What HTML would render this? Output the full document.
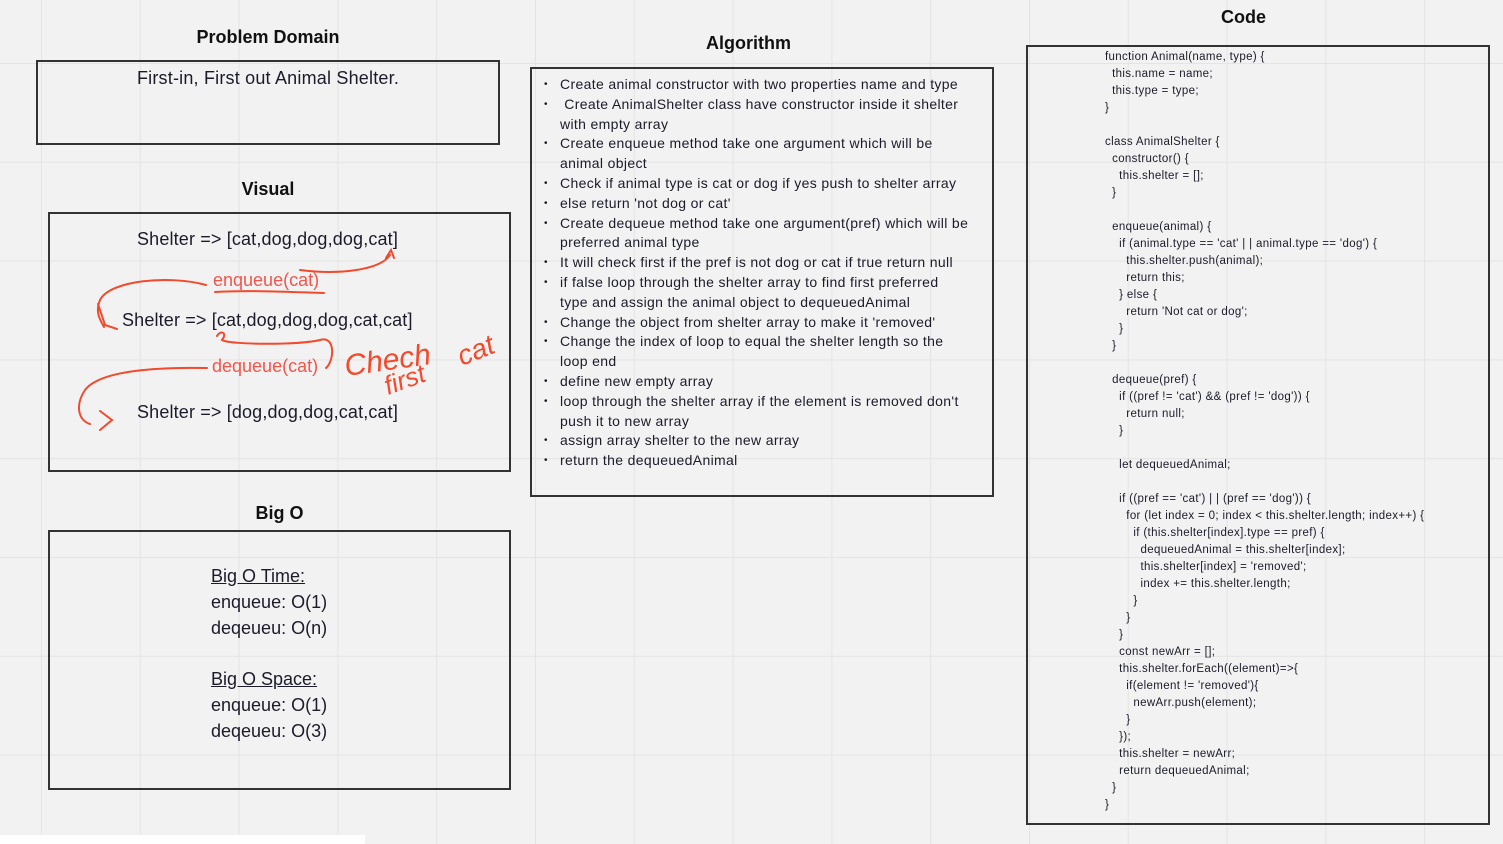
<!DOCTYPE html>
<html><head><meta charset="utf-8"><style>
html,body{margin:0;padding:0}
body{width:1503px;height:844px;overflow:hidden;position:relative;background-color:#f2f2f2;
background-image:linear-gradient(to right,#e4e4e4 1px,transparent 1px),linear-gradient(to bottom,#e4e4e4 1px,transparent 1px);
background-size:98.8px 98.8px;background-position:41px 63px;font-family:"Liberation Sans",sans-serif;color:#1b1b2a}
.abs{position:absolute}
.h{position:absolute;font-weight:bold;font-size:18px;text-align:center;color:#111}
.box{position:absolute;border:2px solid #333;box-sizing:border-box}
.t{position:absolute;font-size:18px;white-space:nowrap}
ul{margin:0;padding:0;list-style:none}
ul li{position:relative;padding-left:29px;font-size:14px;letter-spacing:0.35px;line-height:19.8px;white-space:nowrap}
ul li:before{content:"•";position:absolute;left:13px;font-size:10px}
pre{margin:0;font-family:"Liberation Sans",sans-serif;font-size:11.5px;letter-spacing:0.35px;line-height:17px;color:#1b1b2a}
</style></head><body>
<div class="h" style="left:37px;width:462px;top:27px">Problem Domain</div>
<div class="box" style="left:36px;top:60px;width:464px;height:85px"></div>
<div class="t" style="left:36px;width:464px;text-align:center;top:68px;letter-spacing:0.2px">First-in, First out Animal Shelter.</div>

<div class="h" style="left:37px;width:462px;top:179px">Visual</div>
<div class="box" style="left:48px;top:212px;width:463px;height:260px"></div>
<div class="t" style="left:137px;top:229px;letter-spacing:0.15px">Shelter =&gt; [cat,dog,dog,dog,cat]</div>
<div class="t" style="left:122px;top:310px;letter-spacing:0.15px">Shelter =&gt; [cat,dog,dog,dog,cat,cat]</div>
<div class="t" style="left:137px;top:402px;letter-spacing:0.15px">Shelter =&gt; [dog,dog,dog,cat,cat]</div>
<div class="t" style="left:213px;top:270px;color:#f2554a">enqueue(cat)</div>
<div class="t" style="left:212px;top:356px;color:#f2554a">dequeue(cat)</div>
<svg class="abs" style="left:0;top:0" width="1503" height="844" fill="none" stroke="#f24a2c" stroke-width="2" stroke-linecap="round">
<path d="M300 270 C340 275 380 270 390 255 M386 258 L391 250 L394 258"/>
<path d="M215 292 C250 290 290 292 324 293"/>
<path d="M206 285 C170 275 110 280 100 300 C95 312 100 320 104 327 M98 304 L105 325 L117 329"/>
<path d="M217 336 C220 330 228 332 222 340 C230 345 300 345 320 340 C335 335 335 360 326 368"/>
<path d="M207 368 C160 367 100 370 85 390 C75 405 78 420 90 424 M100 411 L112 420 L100 430"/>
<text x="346" y="376" font-family="Liberation Sans" font-size="30" fill="#f24a2c" stroke="none" transform="rotate(-8 346 376)" font-style="italic">Chech</text>
<text x="388" y="395" font-family="Liberation Sans" font-size="26" fill="#f24a2c" stroke="none" transform="rotate(-20 388 395)" font-style="italic">first</text>
<text x="462" y="366" font-family="Liberation Sans" font-size="28" fill="#f24a2c" stroke="none" transform="rotate(-22 462 366)" font-style="italic">cat</text>
</svg>

<div class="h" style="left:48px;width:463px;top:503px">Big O</div>
<div class="box" style="left:48px;top:530px;width:463px;height:260px"></div>
<div class="abs" style="left:211px;top:564px;font-size:18px;line-height:25.8px">
<div style="text-decoration:underline">Big O Time:</div><div>enqueue: O(1)</div><div>deqeueu: O(n)</div><div>&nbsp;</div>
<div style="text-decoration:underline">Big O Space:</div><div>enqueue: O(1)</div><div>deqeueu: O(3)</div></div>

<div class="h" style="left:517px;width:463px;top:33px">Algorithm</div>
<div class="box" style="left:530px;top:67px;width:464px;height:430px"></div>
<ul class="abs" style="left:531px;top:75px;width:450px">
<li>Create animal constructor with two properties name and type</li>
<li>&nbsp;Create AnimalShelter class have constructor inside it shelter<br>with empty array</li>
<li>Create enqueue method take one argument which will be<br>animal object</li>
<li>Check if animal type is cat or dog if yes push to shelter array</li>
<li>else return 'not dog or cat'</li>
<li>Create dequeue method take one argument(pref) which will be<br>preferred animal type</li>
<li>It will check first if the pref is not dog or cat if true return null</li>
<li>if false loop through the shelter array to find first preferred<br>type and assign the animal object to dequeuedAnimal</li>
<li>Change the object from shelter array to make it 'removed'</li>
<li>Change the index of loop to equal the shelter length so the<br>loop end</li>
<li>define new empty array</li>
<li>loop through the shelter array if the element is removed don't<br>push it to new array</li>
<li>assign array shelter to the new array</li>
<li>return the dequeuedAnimal</li>
</ul>

<div class="h" style="left:1027px;width:433px;top:7px">Code</div>
<div class="box" style="left:1026px;top:45px;width:464px;height:780px"></div>
<pre class="abs" style="left:1105px;top:49px">function Animal(name, type) {
  this.name = name;
  this.type = type;
}

class AnimalShelter {
  constructor() {
    this.shelter = [];
  }

  enqueue(animal) {
    if (animal.type == 'cat' | | animal.type == 'dog') {
      this.shelter.push(animal);
      return this;
    } else {
      return 'Not cat or dog';
    }
  }

  dequeue(pref) {
    if ((pref != 'cat') &amp;&amp; (pref != 'dog')) {
      return null;
    }

    let dequeuedAnimal;

    if ((pref == 'cat') | | (pref == 'dog')) {
      for (let index = 0; index &lt; this.shelter.length; index++) {
        if (this.shelter[index].type == pref) {
          dequeuedAnimal = this.shelter[index];
          this.shelter[index] = 'removed';
          index += this.shelter.length;
        }
      }
    }
    const newArr = [];
    this.shelter.forEach((element)=&gt;{
      if(element != 'removed'){
        newArr.push(element);
      }
    });
    this.shelter = newArr;
    return dequeuedAnimal;
  }
}</pre>
<div class="abs" style="left:0;top:835px;width:365px;height:9px;background:#fff"></div>
</body></html>
